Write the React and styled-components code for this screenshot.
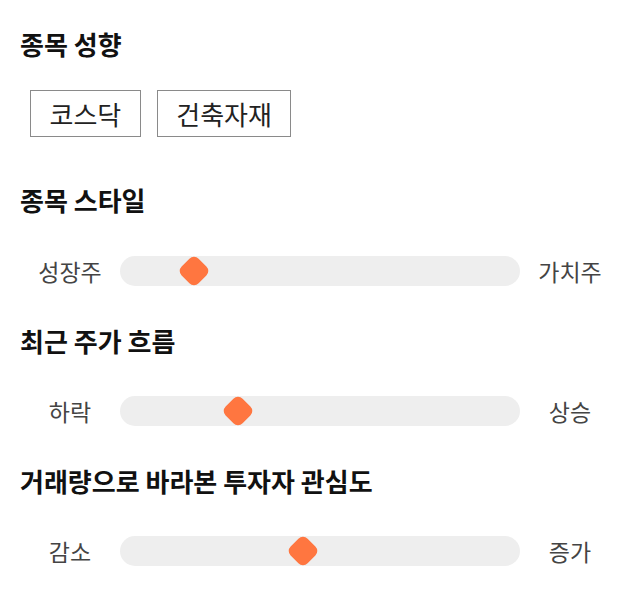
import React from "react";
import styled, { createGlobalStyle } from "styled-components";

const GlobalStyle = createGlobalStyle`
  html, body {
    margin: 0;
    padding: 0;
    background: #ffffff;
  }
  body {
    font-family: "Noto Sans CJK KR", "Noto Sans", sans-serif;
  }
`;

const Page = styled.div`
  display: flex;
  flex-direction: column;
  padding: 26px 20px 0 20px;
  width: 640px;
  box-sizing: border-box;
`;

const Section = styled.section`
  display: flex;
  flex-direction: column;
  gap: ${(p) => p.$gap}px;
  margin-bottom: ${(p) => p.$mb || 0}px;
`;

const Heading = styled.h2`
  margin: 0;
  font-size: 26px;
  line-height: 36px;
  font-weight: 700;
  color: #111111;
`;

const ChipRow = styled.div`
  display: flex;
  gap: 16px;
  padding-left: 10px;
`;

const Chip = styled.div`
  box-sizing: border-box;
  height: 47px;
  display: flex;
  align-items: center;
  padding: 0 18.5px;
  border: 1px solid #8a8a8a;
  font-size: 26px;
  color: #222222;
  background: #ffffff;
`;

const SliderRow = styled.div`
  display: grid;
  grid-template-columns: 100px 1fr 100px;
  align-items: center;
  height: 30px;
`;

const SideLabel = styled.span`
  text-align: center;
  font-size: 23px;
  line-height: 30px;
  color: #444444;
`;

const Track = styled.div`
  position: relative;
  height: 30px;
  border-radius: 15px;
  background: #eeeeee;
`;

const Thumb = styled.div`
  position: absolute;
  top: 50%;
  width: 24px;
  height: 24px;
  border-radius: 6.5px;
  background: #ff7640;
  transform: translate(-50%, -50%) rotate(45deg);
`;

const sliders = [
  { title: "종목 스타일", left: "성장주", right: "가치주", pos: 18.5 },
  { title: "최근 주가 흐름", left: "하락", right: "상승", pos: 29.5 },
  { title: "거래량으로 바라본 투자자 관심도", left: "감소", right: "증가", pos: 45.75 },
];

export default function App() {
  return (
    <>
      <GlobalStyle />
      <Page>
        <Section $gap={28} $mb={45}>
          <Heading>종목 성향</Heading>
          <ChipRow>
            <Chip>코스닥</Chip>
            <Chip>건축자재</Chip>
          </ChipRow>
        </Section>
        {sliders.map((s, i) => (
          <Section key={s.title} $gap={i === 0 ? 38 : 37} $mb={i < sliders.length - 1 ? 37 : 0}>
            <Heading>{s.title}</Heading>
            <SliderRow>
              <SideLabel>{s.left}</SideLabel>
              <Track>
                <Thumb style={{ left: `${s.pos}%` }} />
              </Track>
              <SideLabel>{s.right}</SideLabel>
            </SliderRow>
          </Section>
        ))}
      </Page>
    </>
  );
}
